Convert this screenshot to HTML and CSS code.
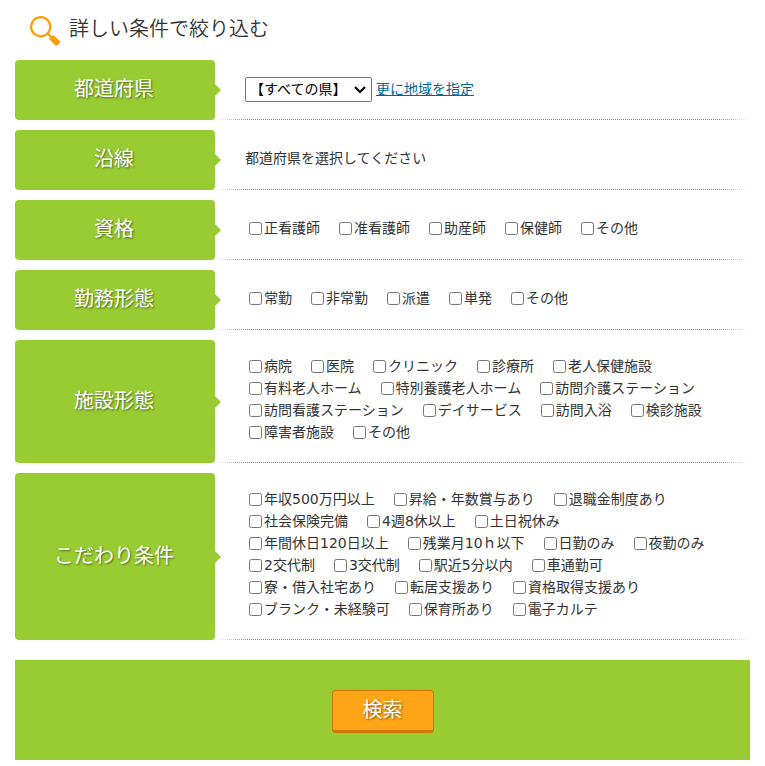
FILE: index.html
```html
<!DOCTYPE html>
<html lang="ja">
<head>
<meta charset="utf-8">
<meta name="viewport" content="width=device-width, initial-scale=1">
<title>詳しい条件で絞り込む</title>
<link rel="stylesheet" href="styles.css">
</head>
<body>
<form class="search">
  <h2 class="title">
    <svg class="title-icon" viewBox="0 0 30 30" aria-hidden="true">
      <circle cx="10.700" cy="10.700" r="9.600" fill="none" stroke="#ff9c08" stroke-width="2.2"/>
      <path d="M17 17l4 4" stroke="#ff9c08" stroke-width="2.4"/>
      <path d="M19.300 22.300l3-3q.8-.4 1.500.2l6 5.600q.6.8 0 1.600l-2.600 2.800q-1 .7-1.800 0l-5.800-6q-.6-.7-.3-1.200z" fill="#ff9c08"/>
    </svg>
    詳しい条件で絞り込む
  </h2>

  <dl class="conditions">
    <div class="row">
      <dt class="name"><label for="pref">都道府県</label></dt>
      <dd class="field area">
        <span class="pref-box">
          <select class="pref" id="pref"><option>【すべての県】</option></select>
          <svg class="pref-arrow" viewBox="0 0 12 8" aria-hidden="true"><path d="M1 1l5 5 5-5" fill="none" stroke="#000" stroke-width="2"/></svg>
        </span>
        <a class="link" href="#">更に地域を指定</a>
      </dd>
    </div>
    <div class="row">
      <dt class="name">沿線</dt>
      <dd class="field">都道府県を選択してください</dd>
    </div>
    <div class="row">
      <dt class="name">資格</dt>
      <dd class="field checks">
        <label class="check"><input type="checkbox">正看護師</label>
        <label class="check"><input type="checkbox">准看護師</label>
        <label class="check"><input type="checkbox">助産師</label>
        <label class="check"><input type="checkbox">保健師</label>
        <label class="check"><input type="checkbox">その他</label>
      </dd>
    </div>
    <div class="row">
      <dt class="name">勤務形態</dt>
      <dd class="field checks">
        <label class="check"><input type="checkbox">常勤</label>
        <label class="check"><input type="checkbox">非常勤</label>
        <label class="check"><input type="checkbox">派遣</label>
        <label class="check"><input type="checkbox">単発</label>
        <label class="check"><input type="checkbox">その他</label>
      </dd>
    </div>
    <div class="row">
      <dt class="name">施設形態</dt>
      <dd class="field checks">
        <label class="check"><input type="checkbox">病院</label>
        <label class="check"><input type="checkbox">医院</label>
        <label class="check"><input type="checkbox">クリニック</label>
        <label class="check"><input type="checkbox">診療所</label>
        <label class="check"><input type="checkbox">老人保健施設</label>
        <label class="check"><input type="checkbox">有料老人ホーム</label>
        <label class="check"><input type="checkbox">特別養護老人ホーム</label>
        <label class="check"><input type="checkbox">訪問介護ステーション</label>
        <label class="check"><input type="checkbox">訪問看護ステーション</label>
        <label class="check"><input type="checkbox">デイサービス</label>
        <label class="check"><input type="checkbox">訪問入浴</label>
        <label class="check"><input type="checkbox">検診施設</label>
        <label class="check"><input type="checkbox">障害者施設</label>
        <label class="check"><input type="checkbox">その他</label>
      </dd>
    </div>
    <div class="row">
      <dt class="name">こだわり条件</dt>
      <dd class="field checks">
        <label class="check"><input type="checkbox">年収500万円以上</label>
        <label class="check"><input type="checkbox">昇給・年数賞与あり</label>
        <label class="check"><input type="checkbox">退職金制度あり</label>
        <label class="check"><input type="checkbox">社会保険完備</label>
        <label class="check"><input type="checkbox">4週8休以上</label>
        <label class="check"><input type="checkbox">土日祝休み</label>
        <label class="check"><input type="checkbox">年間休日120日以上</label>
        <label class="check"><input type="checkbox">残業月10ｈ以下</label>
        <label class="check"><input type="checkbox">日勤のみ</label>
        <label class="check"><input type="checkbox">夜勤のみ</label>
        <label class="check"><input type="checkbox">2交代制</label>
        <label class="check"><input type="checkbox">3交代制</label>
        <label class="check"><input type="checkbox">駅近5分以内</label>
        <label class="check"><input type="checkbox">車通勤可</label>
        <label class="check"><input type="checkbox">寮・借入社宅あり</label>
        <label class="check"><input type="checkbox">転居支援あり</label>
        <label class="check"><input type="checkbox">資格取得支援あり</label>
        <label class="check"><input type="checkbox">ブランク・未経験可</label>
        <label class="check"><input type="checkbox">保育所あり</label>
        <label class="check"><input type="checkbox">電子カルテ</label>
      </dd>
    </div>
  </dl>

  <div class="actions">
    <button class="submit" type="submit">検索</button>
  </div>
</form>
</body>
</html>
```
FILE: styles.css
```css
* {
  box-sizing: border-box;
}

body {
  margin: 0;
  background: #fff;
  color: #333;
  font: 14px/22px "DejaVu Sans", "Noto Sans CJK JP", sans-serif;
}

.search {
  padding: 0 15px 6px;
}

.title {
  display: flex;
  align-items: center;
  gap: 9px;
  height: 60px;
  margin: 0;
  padding: 0 15px 2px;
  font-size: 20px;
  font-weight: 350;
  line-height: 30px;
}

.title-icon {
  width: 30px;
  height: 30px;
  margin-top: 4px;
}

.conditions {
  display: grid;
  gap: 10px;
  margin: 0 0 20px;
}

.row {
  display: grid;
  grid-template-columns: 200px 1fr;
  min-height: 60px;
}

.name {
  position: relative;
  display: flex;
  align-items: center;
  justify-content: center;
  padding: 0 2px 2px 0;
  border-radius: 4px;
  background: #9c3;
  color: #fff;
  font-size: 20px;
  line-height: 30px;
  text-shadow: 1px 1px 2px rgba(0, 0, 0, 0.5);
}

.name::after {
  content: "";
  position: absolute;
  top: calc(50% - 6px);
  left: 100%;
  border: 6px solid transparent;
  border-right-width: 0;
  border-left-color: #9c3;
}

.field {
  position: relative;
  display: flex;
  align-items: center;
  margin: 0;
  padding: 15px 40px 20px 30px;
}

.field::after {
  content: "";
  position: absolute;
  right: 0;
  bottom: 0;
  left: 0;
  height: 1px;
  background:
    linear-gradient(90deg, #fff, transparent 30px, transparent calc(100% - 30px), #fff),
    repeating-linear-gradient(90deg, #888 0 1px, #fff 1px 2px);
}

.area {
  gap: 4px;
  padding-block: 16px 18px;
}

.pref-box {
  position: relative;
  display: flex;
}

.pref {
  width: 127px;
  height: 25px;
  padding: 0 4px 1px;
  border: 1px solid #767676;
  border-radius: 2px;
  appearance: none;
  background: #fff;
  color: #000;
  font: inherit;
}

.pref-arrow {
  position: absolute;
  top: 9px;
  right: 6px;
  width: 12px;
  height: 8px;
  pointer-events: none;
}

.link {
  color: #069;
}

.checks {
  flex-wrap: wrap;
  align-content: center;
  column-gap: 19px;
  padding-left: 34px;
}

.check {
  display: flex;
  align-items: center;
  gap: 2px;
  white-space: nowrap;
}

.check input {
  width: 13px;
  height: 13px;
  margin: 1px 0 0;
}

.actions {
  display: flex;
  justify-content: center;
  padding: 30px 0 27px;
  background: #9c3;
}

.submit {
  height: 43px;
  padding: 0 30px 2px;
  border: 1px solid #d27800;
  border-bottom-width: 3px;
  border-radius: 4px;
  background: #ffa517;
  color: #fff;
  font: inherit;
  font-size: 20px;
  text-shadow: 1px 1px 2px rgba(0, 0, 0, 0.5);
}
```
